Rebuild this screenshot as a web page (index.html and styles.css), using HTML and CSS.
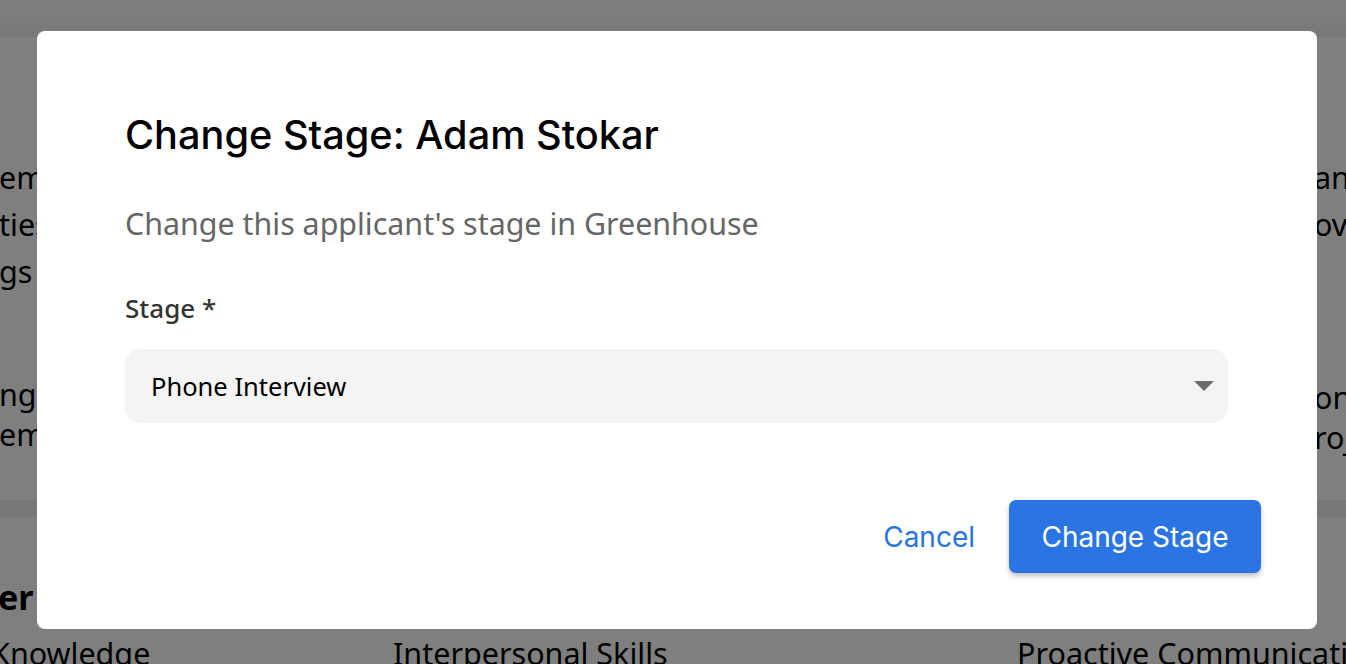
FILE: index.html
```html
<!DOCTYPE html>
<html>
<head>
<meta charset="utf-8">
<link rel="stylesheet" href="styles.css">
</head>
<body>
<div class="page">
  <header class="topbar"></header>
  <section class="card card-top">
    <div class="col col-left">
      <p class="para">ems with<br>ties and<br>gs and</p>
      <p class="para para-2">ng all<br>emos</p>
    </div>
    <div class="col col-right">
      <p class="para">an<br>ove</p>
      <p class="para para-2">ons<br>roj</p>
    </div>
  </section>
  <div class="gap"></div>
  <section class="card card-bottom">
    <h2 class="section-title">er Skills</h2>
    <div class="skills">
      <div class="skill">Knowledge</div>
      <div class="skill">Interpersonal Skills</div>
      <div class="skill">Proactive Communication</div>
    </div>
  </section>
</div>

<div class="overlay">
  <div class="modal">
    <h1 class="modal-title">Change Stage: Adam Stokar</h1>
    <p class="modal-sub">Change this applicant's stage in Greenhouse</p>
    <label class="field-label">Stage *</label>
    <div class="select">
      <span class="select-value">Phone Interview</span>
      <svg class="select-arrow" width="20" height="10" viewBox="0 0 20 10"><path d="M0 0 L20 0 L10 10 Z" fill="#6b6b6b"/></svg>
    </div>
    <div class="actions">
      <button class="btn-text">Cancel</button>
      <button class="btn-primary">Change Stage</button>
    </div>
  </div>
</div>
</body>
</html>
```
FILE: styles.css
```css
* { box-sizing: border-box; }
html, body { margin: 0; padding: 0; }
body {
  width: 1346px;
  height: 664px;
  overflow: hidden;
  background: #ffffff;
  font-family: "Noto Sans", sans-serif;
  color: #000;
}
.page { width: 1346px; }
.topbar {
  height: 37px;
  background: linear-gradient(#ffffff, #f1f1f1);
}
.card { background: #ffffff; }
.card-top {
  height: 463px;
  display: flex;
  justify-content: space-between;
  padding-top: 117px;
}
.para {
  margin: 0;
  font-size: 30.5px;
  line-height: 47px;
  white-space: nowrap;
}
.para-2 { margin-top: 79px; line-height: 40px; }
.col-left { margin-left: -1px; }
.col-right { width: 32px; overflow: hidden; }
.col-right .para-2 { margin-top: 129px; }
.gap { height: 17px; background: #f1f1f1; }
.card-bottom { padding-top: 58px; }
.section-title {
  margin: 0;
  font-size: 34px;
  font-weight: 700;
  line-height: 44px;
  white-space: nowrap;
  margin-left: -2px;
}
.skills {
  display: grid;
  grid-template-columns: 402px 624px 1fr;
  margin-left: -9px;
  margin-top: 14px;
}
.skill { font-size: 30.5px; line-height: 40px; white-space: nowrap; }

.overlay {
  position: fixed;
  inset: 0;
  background: rgba(0, 0, 0, 0.5);
  padding: 31px 29px 35px 37px;
  display: flex;
}
.modal {
  flex: 1;
  background: #fff;
  border-radius: 8px;
  padding: 80px 89px 56px 88px;
  display: flex;
  flex-direction: column;
}
.modal-title {
  margin: 0;
  font-family: "Inter", sans-serif;
  font-weight: 500;
  font-size: 39.7px;
  line-height: 48px;
  color: #000;
}
.modal-sub {
  margin: 45px 0 0;
  font-size: 30.4px;
  line-height: 40px;
  color: #666;
}
.field-label {
  margin-top: 47px;
  font-size: 26px;
  line-height: 34px;
  font-weight: 500;
  color: #333;
}
.select {
  margin-top: 24px;
  height: 74px;
  background: #f4f4f4;
  border-radius: 16px;
  display: flex;
  align-items: center;
  justify-content: space-between;
  padding: 0 14px 0 26px;
}
.select-value { font-size: 25.5px; color: #000; }
.select-arrow { display: block; }
.actions {
  margin-top: auto;
  margin-right: -33px;
  display: flex;
  justify-content: flex-end;
  align-items: center;
  gap: 34px;
}
.btn-text, .btn-primary {
  font-family: "Inter", sans-serif;
  font-size: 28px;
  border: none;
  cursor: pointer;
}
.btn-text {
  background: none;
  color: #2a73e3;
  padding: 0;
}
.btn-primary {
  background: #2a74e4;
  color: #fff;
  height: 73px;
  width: 252px;
  border-radius: 7px;
  box-shadow: 0 3px 5px rgba(0,0,0,0.25);
}
```
